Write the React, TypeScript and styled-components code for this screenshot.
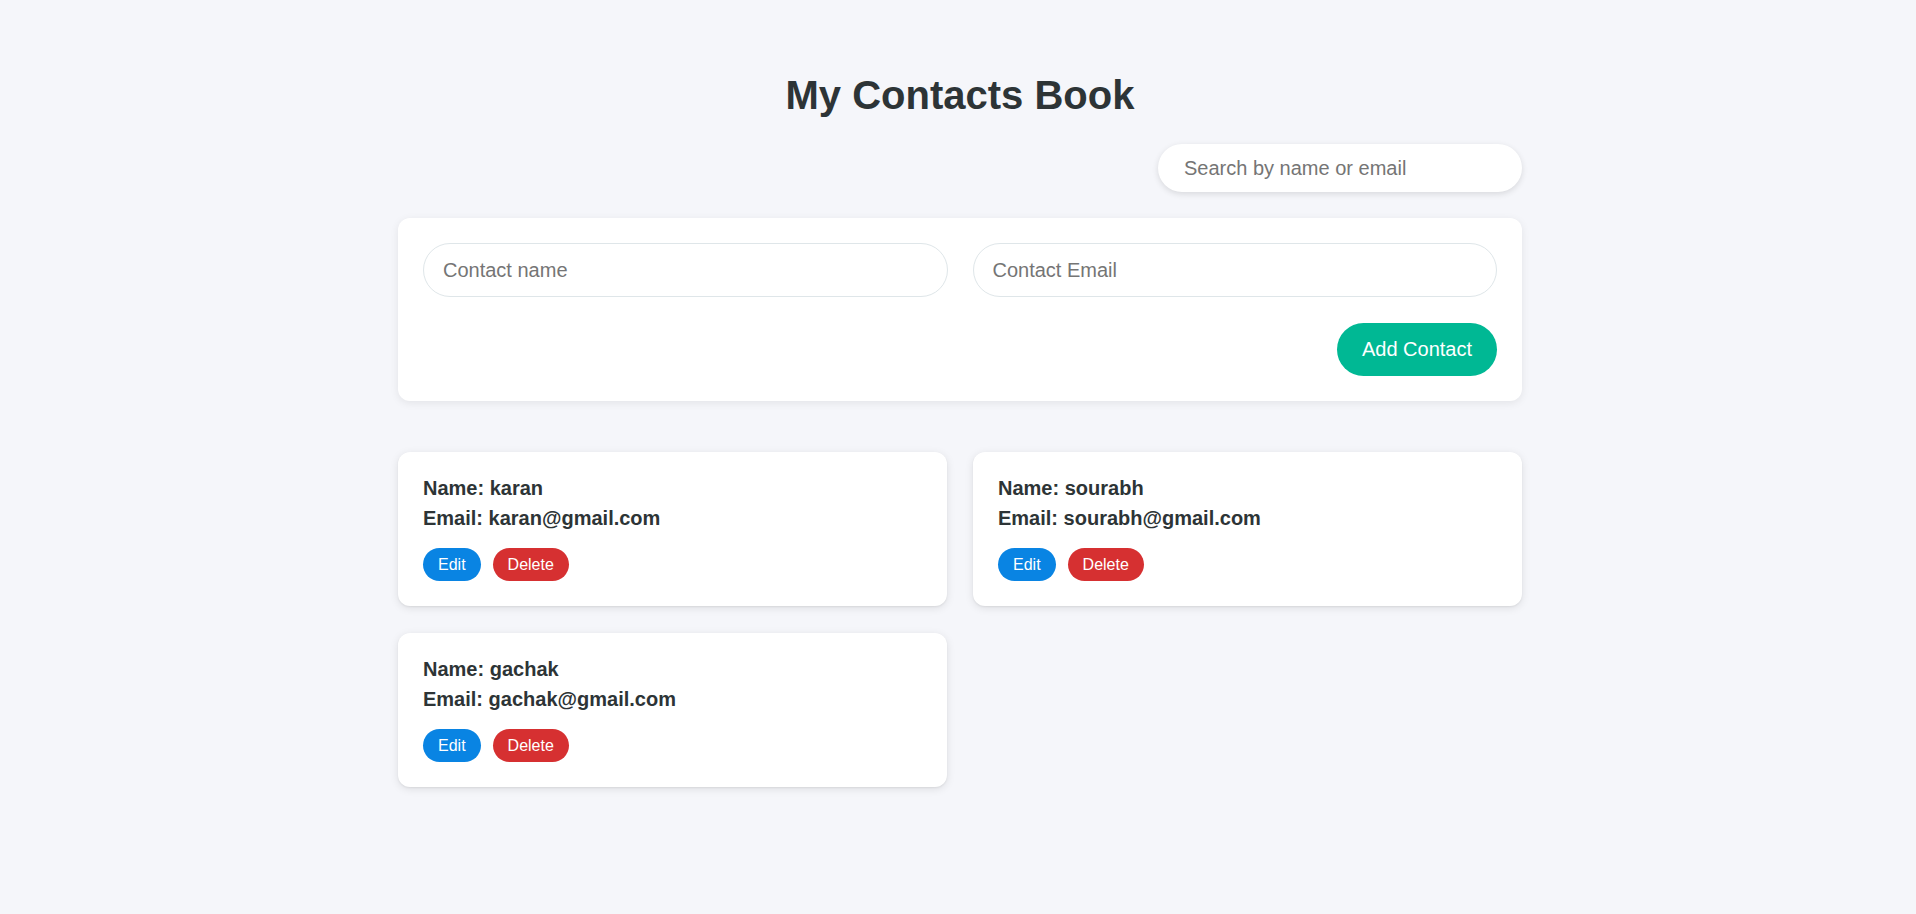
import React, { useState } from "react";
import styled, { createGlobalStyle } from "styled-components";

const GlobalStyle = createGlobalStyle`
  html, body {
    margin: 0;
    padding: 0;
    background: #f5f6fa;
    font-family: "Liberation Sans", Arial, sans-serif;
  }
  * { box-sizing: border-box; }
`;

const Page = styled.div`
  min-height: 914px;
  padding: 72px 0 60px 4px;
`;

const Container = styled.div`
  width: 1124px;
  margin: 0 auto;
  display: flex;
  flex-direction: column;
`;

const Title = styled.h1`
  margin: 0;
  text-align: center;
  font-size: 40px;
  line-height: 46px;
  font-weight: 700;
  color: #2d3436;
`;

const SearchRow = styled.div`
  display: flex;
  justify-content: flex-end;
  margin-top: 26px;
`;

const SearchInput = styled.input`
  width: 364px;
  height: 48px;
  padding: 0 26px;
  border: none;
  border-radius: 24px;
  background: #fff;
  font-family: inherit;
  font-size: 20px;
  color: #2d3436;
  box-shadow: 0 2px 6px rgba(0, 0, 0, 0.12);
  outline: none;
  &::placeholder { color: #757575; }
`;

const FormCard = styled.div`
  margin-top: 26px;
  background: #fff;
  border-radius: 12px;
  padding: 25px;
  box-shadow: 0 2px 8px rgba(0, 0, 0, 0.08);
  display: flex;
  flex-direction: column;
  gap: 26px;
`;

const InputRow = styled.div`
  display: grid;
  grid-template-columns: 1fr 1fr;
  gap: 25px;
`;

const TextInput = styled.input`
  height: 54px;
  padding: 0 19px;
  border: 1px solid #dfe6e9;
  border-radius: 27px;
  background: #fff;
  font-family: inherit;
  font-size: 20px;
  color: #2d3436;
  outline: none;
  &::placeholder { color: #757575; }
`;

const ActionRow = styled.div`
  display: flex;
  justify-content: flex-end;
`;

const AddButton = styled.button`
  height: 53px;
  padding: 0 25px;
  border: none;
  border-radius: 27px;
  background: #00b894;
  color: #fff;
  font-family: inherit;
  font-size: 20px;
  cursor: pointer;
`;

const CardGrid = styled.div`
  margin-top: 51px;
  display: grid;
  grid-template-columns: 1fr 1fr;
  column-gap: 26px;
  row-gap: 27px;
`;

const ContactCard = styled.div`
  background: #fff;
  border-radius: 12px;
  padding: 25px;
  height: 154px;
  box-shadow: 0 1px 2px rgba(0, 0, 0, 0.06), 0 2px 8px rgba(0, 0, 0, 0.1);
  display: flex;
  flex-direction: column;
`;

const InfoLine = styled.div`
  font-size: 20px;
  font-weight: 700;
  line-height: 23px;
  color: #2d3436;
  & + & { margin-top: 7px; }
`;

const ButtonRow = styled.div`
  display: flex;
  gap: 12px;
  margin-top: 18px;
`;

const SmallButton = styled.button<{ $variant: "edit" | "delete" }>`
  height: 33px;
  padding: 0 15px;
  border: none;
  border-radius: 17px;
  background: ${(p) => (p.$variant === "edit" ? "#0984e3" : "#d63031")};
  color: #fff;
  font-family: inherit;
  font-size: 16px;
  cursor: pointer;
`;

const contacts = [
  { name: "karan", email: "karan@gmail.com" },
  { name: "sourabh", email: "sourabh@gmail.com" },
  { name: "gachak", email: "gachak@gmail.com" },
];

export default function App() {
  const [search, setSearch] = useState("");
  const [name, setName] = useState("");
  const [email, setEmail] = useState("");
  return (
    <Page>
      <GlobalStyle />
      <Container>
        <Title>My Contacts Book</Title>
        <SearchRow>
          <SearchInput
            placeholder="Search by name or email"
            value={search}
            onChange={(e) => setSearch(e.target.value)}
          />
        </SearchRow>
        <FormCard>
          <InputRow>
            <TextInput placeholder="Contact name" value={name} onChange={(e) => setName(e.target.value)} />
            <TextInput placeholder="Contact Email" value={email} onChange={(e) => setEmail(e.target.value)} />
          </InputRow>
          <ActionRow>
            <AddButton>Add Contact</AddButton>
          </ActionRow>
        </FormCard>
        <CardGrid>
          {contacts.map((c) => (
            <ContactCard key={c.email}>
              <InfoLine>Name: {c.name}</InfoLine>
              <InfoLine>Email: {c.email}</InfoLine>
              <ButtonRow>
                <SmallButton $variant="edit">Edit</SmallButton>
                <SmallButton $variant="delete">Delete</SmallButton>
              </ButtonRow>
            </ContactCard>
          ))}
        </CardGrid>
      </Container>
    </Page>
  );
}
